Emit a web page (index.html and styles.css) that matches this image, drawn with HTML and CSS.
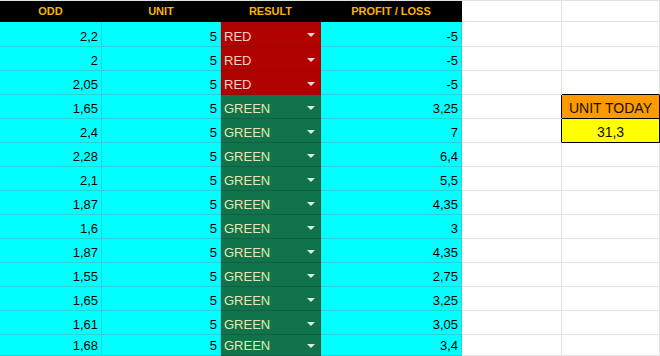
FILE: index.html
```html
<!DOCTYPE html>
<html>
<head>
<meta charset="utf-8">
<link rel="stylesheet" href="styles.css">
</head>
<body>
<div class="sheet">
  <div class="c h">ODD</div><div class="c h">UNIT</div><div class="c h">RESULT</div><div class="c h">PROFIT / LOSS</div><div class="c e"></div><div class="c e"></div>

  <div class="c n">2,2</div><div class="c n">5</div><div class="c r red"><span>RED</span><i class="dd"></i></div><div class="c n">-5</div><div class="c e"></div><div class="c e"></div>
  <div class="c n">2</div><div class="c n">5</div><div class="c r red"><span>RED</span><i class="dd"></i></div><div class="c n">-5</div><div class="c e"></div><div class="c e"></div>
  <div class="c n">2,05</div><div class="c n">5</div><div class="c r red"><span>RED</span><i class="dd"></i></div><div class="c n">-5</div><div class="c e"></div><div class="c e above-box"></div>
  <div class="c n">1,65</div><div class="c n">5</div><div class="c r green"><span>GREEN</span><i class="dd"></i></div><div class="c n">3,25</div><div class="c e left-of-box"></div><div class="c box ut">UNIT TODAY</div>
  <div class="c n">2,4</div><div class="c n">5</div><div class="c r green"><span>GREEN</span><i class="dd"></i></div><div class="c n">7</div><div class="c e left-of-box"></div><div class="c box uv">31,3</div>
  <div class="c n">2,28</div><div class="c n">5</div><div class="c r green"><span>GREEN</span><i class="dd"></i></div><div class="c n">6,4</div><div class="c e"></div><div class="c e"></div>
  <div class="c n">2,1</div><div class="c n">5</div><div class="c r green"><span>GREEN</span><i class="dd"></i></div><div class="c n">5,5</div><div class="c e"></div><div class="c e"></div>
  <div class="c n">1,87</div><div class="c n">5</div><div class="c r green"><span>GREEN</span><i class="dd"></i></div><div class="c n">4,35</div><div class="c e"></div><div class="c e"></div>
  <div class="c n">1,6</div><div class="c n">5</div><div class="c r green"><span>GREEN</span><i class="dd"></i></div><div class="c n">3</div><div class="c e"></div><div class="c e"></div>
  <div class="c n">1,87</div><div class="c n">5</div><div class="c r green"><span>GREEN</span><i class="dd"></i></div><div class="c n">4,35</div><div class="c e"></div><div class="c e"></div>
  <div class="c n">1,55</div><div class="c n">5</div><div class="c r green"><span>GREEN</span><i class="dd"></i></div><div class="c n">2,75</div><div class="c e"></div><div class="c e"></div>
  <div class="c n">1,65</div><div class="c n">5</div><div class="c r green"><span>GREEN</span><i class="dd"></i></div><div class="c n">3,25</div><div class="c e"></div><div class="c e"></div>
  <div class="c n">1,61</div><div class="c n">5</div><div class="c r green"><span>GREEN</span><i class="dd"></i></div><div class="c n">3,05</div><div class="c e"></div><div class="c e"></div>
  <div class="c n">1,68</div><div class="c n">5</div><div class="c r green"><span>GREEN</span><i class="dd"></i></div><div class="c n">3,4</div><div class="c e"></div><div class="c e"></div>
</div>
</body>
</html>
```
FILE: styles.css
```css
html, body {
  margin: 0;
  padding: 0;
  background: #ffffff;
  overflow: hidden;
}

.sheet {
  display: grid;
  grid-template-columns: 102px 119px 100px 141px 100px 98px;
  grid-template-rows: 21px 25px repeat(12, 24px) 21px;
  border-top: 1px solid #e2e2e2;
  font-family: "Liberation Sans", Arial, sans-serif;
  font-size: 13px;
  line-height: 15px;
  color: #000;
}

.c {
  box-sizing: border-box;
  border-right: 1px solid #e2e2e2;
  border-bottom: 1px solid #e2e2e2;
  display: flex;
  align-items: flex-end;
  padding: 0 3px 2px 3px;
  white-space: nowrap;
  overflow: hidden;
}

.h {
  background: #000;
  border-color: #000;
  color: #f9b400;
  font-weight: bold;
  font-size: 11px;
  line-height: 13px;
  justify-content: center;
  padding-bottom: 3px;
}

.n {
  background: #00ffff;
  border-color: #22d6d6;
  justify-content: flex-end;
}

.r {
  justify-content: space-between;
  padding-left: 3px;
  padding-right: 5px;
}

.red {
  background: #b10202;
  border-color: #9c0606;
  color: #ffcfc9;
}

.green {
  background: #11734b;
  border-color: #0e6140;
  color: #e2e8b2;
}

.dd {
  display: block;
  align-self: center;
  margin-top: 4px;
  width: 0;
  height: 0;
  border-left: 4px solid transparent;
  border-right: 4px solid transparent;
  border-top: 4px solid rgba(255, 255, 255, 0.85);
}

.red .dd {
  border-top-color: #f8d2cd;
}

.e {
  background: #fff;
}

.above-box {
  border-bottom-color: #000;
}

.left-of-box {
  border-right-color: #000;
}

.box {
  border-right-color: #000;
  border-bottom-color: #000;
  justify-content: center;
  font-size: 14px;
  color: #111;
}

.ut {
  background: #ff9900;
}

.uv {
  background: #ffff00;
}
```
